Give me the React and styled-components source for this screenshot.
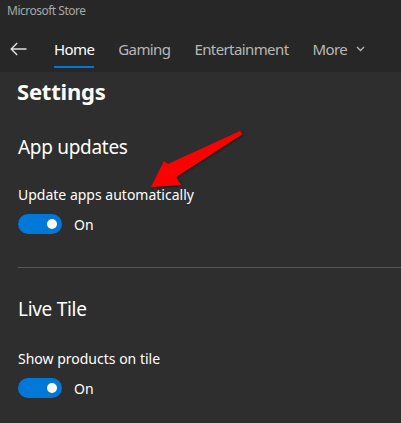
import React from "react";
import styled, { createGlobalStyle } from "styled-components";

const Global = createGlobalStyle`
  html, body {
    margin: 0;
    padding: 0;
    background: #2e2e2e;
  }
  body {
    font-family: "Noto Sans", "Open Sans", sans-serif;
    color: #fff;
  }
`;

const Page = styled.div`
  width: 401px;
  height: 423px;
  overflow: hidden;
  position: relative;
  background: #2e2e2e;
`;

const Header = styled.header`
  background: #272727;
  height: 72px;
  display: flex;
  flex-direction: column;
`;

const TitleBar = styled.div`
  height: 21px;
  padding-left: 7px;
  display: flex;
  align-items: center;
  font-size: 12px;
  color: #a8a8a8;
  letter-spacing: -0.5px;
`;

const Nav = styled.nav`
  flex: 1;
  display: flex;
  align-items: stretch;
  padding-left: 9px;
  padding-top: 5px;
`;

const BackButton = styled.button`
  background: none;
  border: none;
  padding: 0;
  width: 19px;
  margin-right: 26px;
  display: flex;
  align-items: center;
  justify-content: center;
  color: #e0e0e0;
`;

const Tab = styled.a`
  position: relative;
  display: flex;
  align-items: center;
  gap: 9px;
  margin-right: 24px;
  font-size: 15px;
  letter-spacing: -0.6px;
  color: ${(p) => (p.$active ? "#ffffff" : "#b8b8b8")};

  &::after {
    content: "";
    display: ${(p) => (p.$active ? "block" : "none")};
    position: absolute;
    left: 0;
    right: 0;
    bottom: 4px;
    height: 2px;
    background: #0078d7;
  }
`;

const Content = styled.main`
  padding: 3px 0 0 18px;
`;

const PageTitle = styled.h1`
  margin: 0 0 0 -1px;
  font-size: 22px;
  font-weight: 700;
  line-height: 32px;
  letter-spacing: -0.2px;
`;

const Section = styled.section`
  padding-top: ${(p) => p.$top}px;
`;

const SectionTitle = styled.h2`
  margin: 0;
  font-size: 19px;
  font-weight: 400;
  line-height: 28px;
  letter-spacing: -0.3px;
`;

const Label = styled.div`
  margin-top: ${(p) => p.$gap}px;
  font-size: 14px;
  line-height: 20px;
`;

const ToggleRow = styled.div`
  display: flex;
  align-items: center;
  gap: 12px;
  margin-top: 9px;
  font-size: 14px;
`;

const Track = styled.span`
  width: 44px;
  height: 20px;
  border-radius: 10px;
  background: #0078d7;
  position: relative;

  &::after {
    content: "";
    position: absolute;
    right: 5px;
    top: 5px;
    width: 10px;
    height: 10px;
    border-radius: 50%;
    background: #fff;
  }
`;

const Divider = styled.hr`
  border: none;
  border-top: 1px solid #555;
  margin: 33px 0 0;
`;

const Annotation = styled.svg`
  position: absolute;
  left: 0;
  top: 0;
  pointer-events: none;
`;

function Toggle() {
  return (
    <ToggleRow>
      <Track />
      <span>On</span>
    </ToggleRow>
  );
}

export default function App() {
  return (
    <Page>
      <Global />
      <Header>
        <TitleBar>Microsoft Store</TitleBar>
        <Nav>
          <BackButton aria-label="Back">
            <svg width="17" height="14" viewBox="0 0 17 14" fill="none" stroke="currentColor" strokeWidth="1.4">
              <path d="M16.5 7H1.2M7.2 1L1.2 7l6 6" />
            </svg>
          </BackButton>
          <Tab $active>Home</Tab>
          <Tab>Gaming</Tab>
          <Tab>Entertainment</Tab>
          <Tab>
            More
            <svg width="9" height="6" viewBox="0 0 9 6" fill="none" stroke="currentColor" strokeWidth="1.3">
              <path d="M1 1l3.5 3.5L8 1" />
            </svg>
          </Tab>
        </Nav>
      </Header>
      <Content>
        <PageTitle>Settings</PageTitle>
        <Section $top={26}>
          <SectionTitle>App updates</SectionTitle>
          <Label $gap={24}>Update apps automatically</Label>
          <Toggle />
        </Section>
        <Divider />
        <Section $top={27}>
          <SectionTitle>Live Tile</SectionTitle>
          <Label $gap={26}>Show products on tile</Label>
          <Toggle />
        </Section>
      </Content>
      <Annotation width="401" height="423" viewBox="0 0 401 423">
        <defs>
          <filter id="sh" x="-20%" y="-20%" width="140%" height="140%">
            <feDropShadow dx="1" dy="1" stdDeviation="1" floodColor="#000" floodOpacity="0.5" />
          </filter>
        </defs>
        <path
          d="M240 131 L242.5 134 L176 177 L181 185 L151 187 L164 161 L168 164 Z"
          fill="#ff0000"
          filter="url(#sh)"
        />
      </Annotation>
    </Page>
  );
}
